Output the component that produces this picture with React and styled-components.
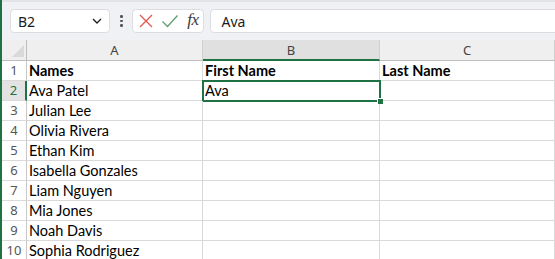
import styled, { createGlobalStyle } from "styled-components";

const GlobalStyle = createGlobalStyle`
  body {
    margin: 0;
    background: #ffffff;
    font-family: "Segoe UI", "Noto Sans", "Liberation Sans", sans-serif;
  }
`;

const Page = styled.div`
  width: 555px;
  height: 259px;
  overflow: hidden;
  border-left: 2px solid #1e7244;
  box-sizing: border-box;
  background: #ffffff;
`;

const TopBand = styled.div`
  height: 2px;
  background: #e2e3e6;
`;

//name box, buttons and formula input
const Toolbar = styled.div`
  display: flex;
  align-items: center;
  height: 38px;
  padding: 0 0 0 8px;
  background: #f0f1f4;
  overflow: hidden;
`;

const Field = styled.div`
  display: flex;
  align-items: center;
  height: 24px;
  box-sizing: border-box;
  background: #ffffff;
  border: 1px solid #dcdde0;
  border-radius: 4px;
`;

const NameBox = styled(Field)`
  width: 100px;
  padding: 0 7px 0 7px;
  justify-content: space-between;
  font-size: 14px;
  color: #1b1b1b;
`;

const Dots = styled.div`
  display: flex;
  flex-direction: column;
  gap: 2px;
  margin: 0 9px 0 10px;
  & span {
    width: 2.5px;
    height: 2.5px;
    border-radius: 50%;
    background: #555;
  }
`;

const ButtonBox = styled(Field)`
  width: 72px;
  padding: 0 4px 0 5px;
  justify-content: space-between;
`;

const FormulaBox = styled(Field)`
  flex: 1;
  margin: 0 -10px 0 6px;
  padding-left: 11px;
  font-size: 14px;
  color: #1b1b1b;
`;

const Fx = styled.span`
  font-family: "Liberation Serif", "DejaVu Serif", serif;
  font-style: italic;
  font-size: 17px;
  color: #3a3a3a;
  letter-spacing: -0.5px;
  margin-top: -2px;
`;

//sheet grid
const Sheet = styled.div`
  display: grid;
  grid-template-columns: 25px 176px 177px 1fr;
  grid-template-rows: 21px;
  grid-auto-rows: 20px;
  font-family: Lato, "Open Sans", sans-serif;
`;

const Corner = styled.div`
  box-sizing: border-box;
  background: #efefef;
  border-right: 1px solid #bdbdbd;
  border-bottom: 1px solid #bdbdbd;
  display: flex;
  justify-content: flex-end;
  align-items: flex-end;
  padding: 0 2px 3px 0;
`;

const ColHead = styled.div`
  box-sizing: border-box;
  display: flex;
  align-items: center;
  justify-content: center;
  font-family: "Segoe UI", "Noto Sans", sans-serif;
  font-size: 13px;
  color: #444;
  background: ${(p) => (p.active ? "#e0e0e0" : "#efefef")};
  border-right: 1px solid #d0d0d0;
  border-bottom: ${(p) => (p.active ? "2px solid #1e7244" : "1px solid #bdbdbd")};
`;

const RowHead = styled.div`
  box-sizing: border-box;
  display: flex;
  align-items: flex-end;
  justify-content: center;
  padding-bottom: 1px;
  font-family: "Segoe UI", "Noto Sans", sans-serif;
  font-size: 13px;
  color: ${(p) => (p.active ? "#1e7244" : "#555")};
  background: ${(p) => (p.active ? "#e3e3e3" : "#ffffff")};
  border-right: ${(p) => (p.active ? "2px solid #1e7244" : "1px solid #c8c8c8")};
  border-bottom: 1px solid #dadada;
`;

const Cell = styled.div`
  position: relative;
  box-sizing: border-box;
  display: flex;
  align-items: flex-end;
  padding: 0 0 0 2px;
  font-size: 14.5px;
  line-height: 18px;
  font-weight: ${(p) => (p.bold ? 700 : 400)};
  color: #000;
  white-space: nowrap;
  border-right: 1px solid #d9d9d9;
  border-bottom: 1px solid #d9d9d9;

  ${(p) =>
    p.selected &&
    `
    &::after {
      content: "";
      position: absolute;
      left: -1px;
      top: -1px;
      right: -2px;
      bottom: -2px;
      border: 2px solid #1e7244;
    }
    &::before {
      content: "";
      position: absolute;
      right: -4px;
      bottom: -4px;
      width: 5px;
      height: 5px;
      background: #1e7244;
      border: 1px solid #fff;
      border-right: none;
      border-bottom: none;
      z-index: 2;
    }
  `}
`;

const names = [
  "Ava Patel",
  "Julian Lee",
  "Olivia Rivera",
  "Ethan Kim",
  "Isabella Gonzales",
  "Liam Nguyen",
  "Mia Jones",
  "Noah Davis",
  "Sophia Rodriguez",
];

const Row = ({ n, name }) => (
  <>
    <RowHead active={n === 2}>{n}</RowHead>
    <Cell>{name}</Cell>
    <Cell selected={n === 2}>{n === 2 ? "Ava" : ""}</Cell>
    <Cell />
  </>
);

const App = () => {
  return (
    <>
      <GlobalStyle />
      <Page>
        <TopBand />
        <Toolbar>
          <NameBox>
            B2
            <svg width="10" height="6" viewBox="0 0 10 6">
              <path d="M1 1l4 4 4-4" fill="none" stroke="#222" strokeWidth="1.4" />
            </svg>
          </NameBox>
          <Dots>
            <span />
            <span />
            <span />
          </Dots>
          <ButtonBox>
            <svg width="16" height="16" viewBox="0 0 16 16">
              <path d="M2 2l12 12M14 2L2 14" stroke="#e2574c" strokeWidth="1.3" fill="none" />
            </svg>
            <svg width="18" height="16" viewBox="0 0 18 16">
              <path d="M1.5 8.5l5 5L16.5 2.5" stroke="#5f9f72" strokeWidth="1.3" fill="none" />
            </svg>
            <Fx>fx</Fx>
          </ButtonBox>
          <FormulaBox>Ava</FormulaBox>
        </Toolbar>

        <Sheet>
          <Corner>
            <svg width="12" height="12" viewBox="0 0 12 12">
              <path d="M12 0v12H0z" fill="#d9d9d9" />
            </svg>
          </Corner>
          <ColHead>A</ColHead>
          <ColHead active>B</ColHead>
          <ColHead>C</ColHead>

          <RowHead>1</RowHead>
          <Cell bold>Names</Cell>
          <Cell bold>First Name</Cell>
          <Cell bold>Last Name</Cell>

          {names.map((name, i) => (
            <Row key={name} n={i + 2} name={name} />
          ))}
        </Sheet>
      </Page>
    </>
  );
};

export default App;
